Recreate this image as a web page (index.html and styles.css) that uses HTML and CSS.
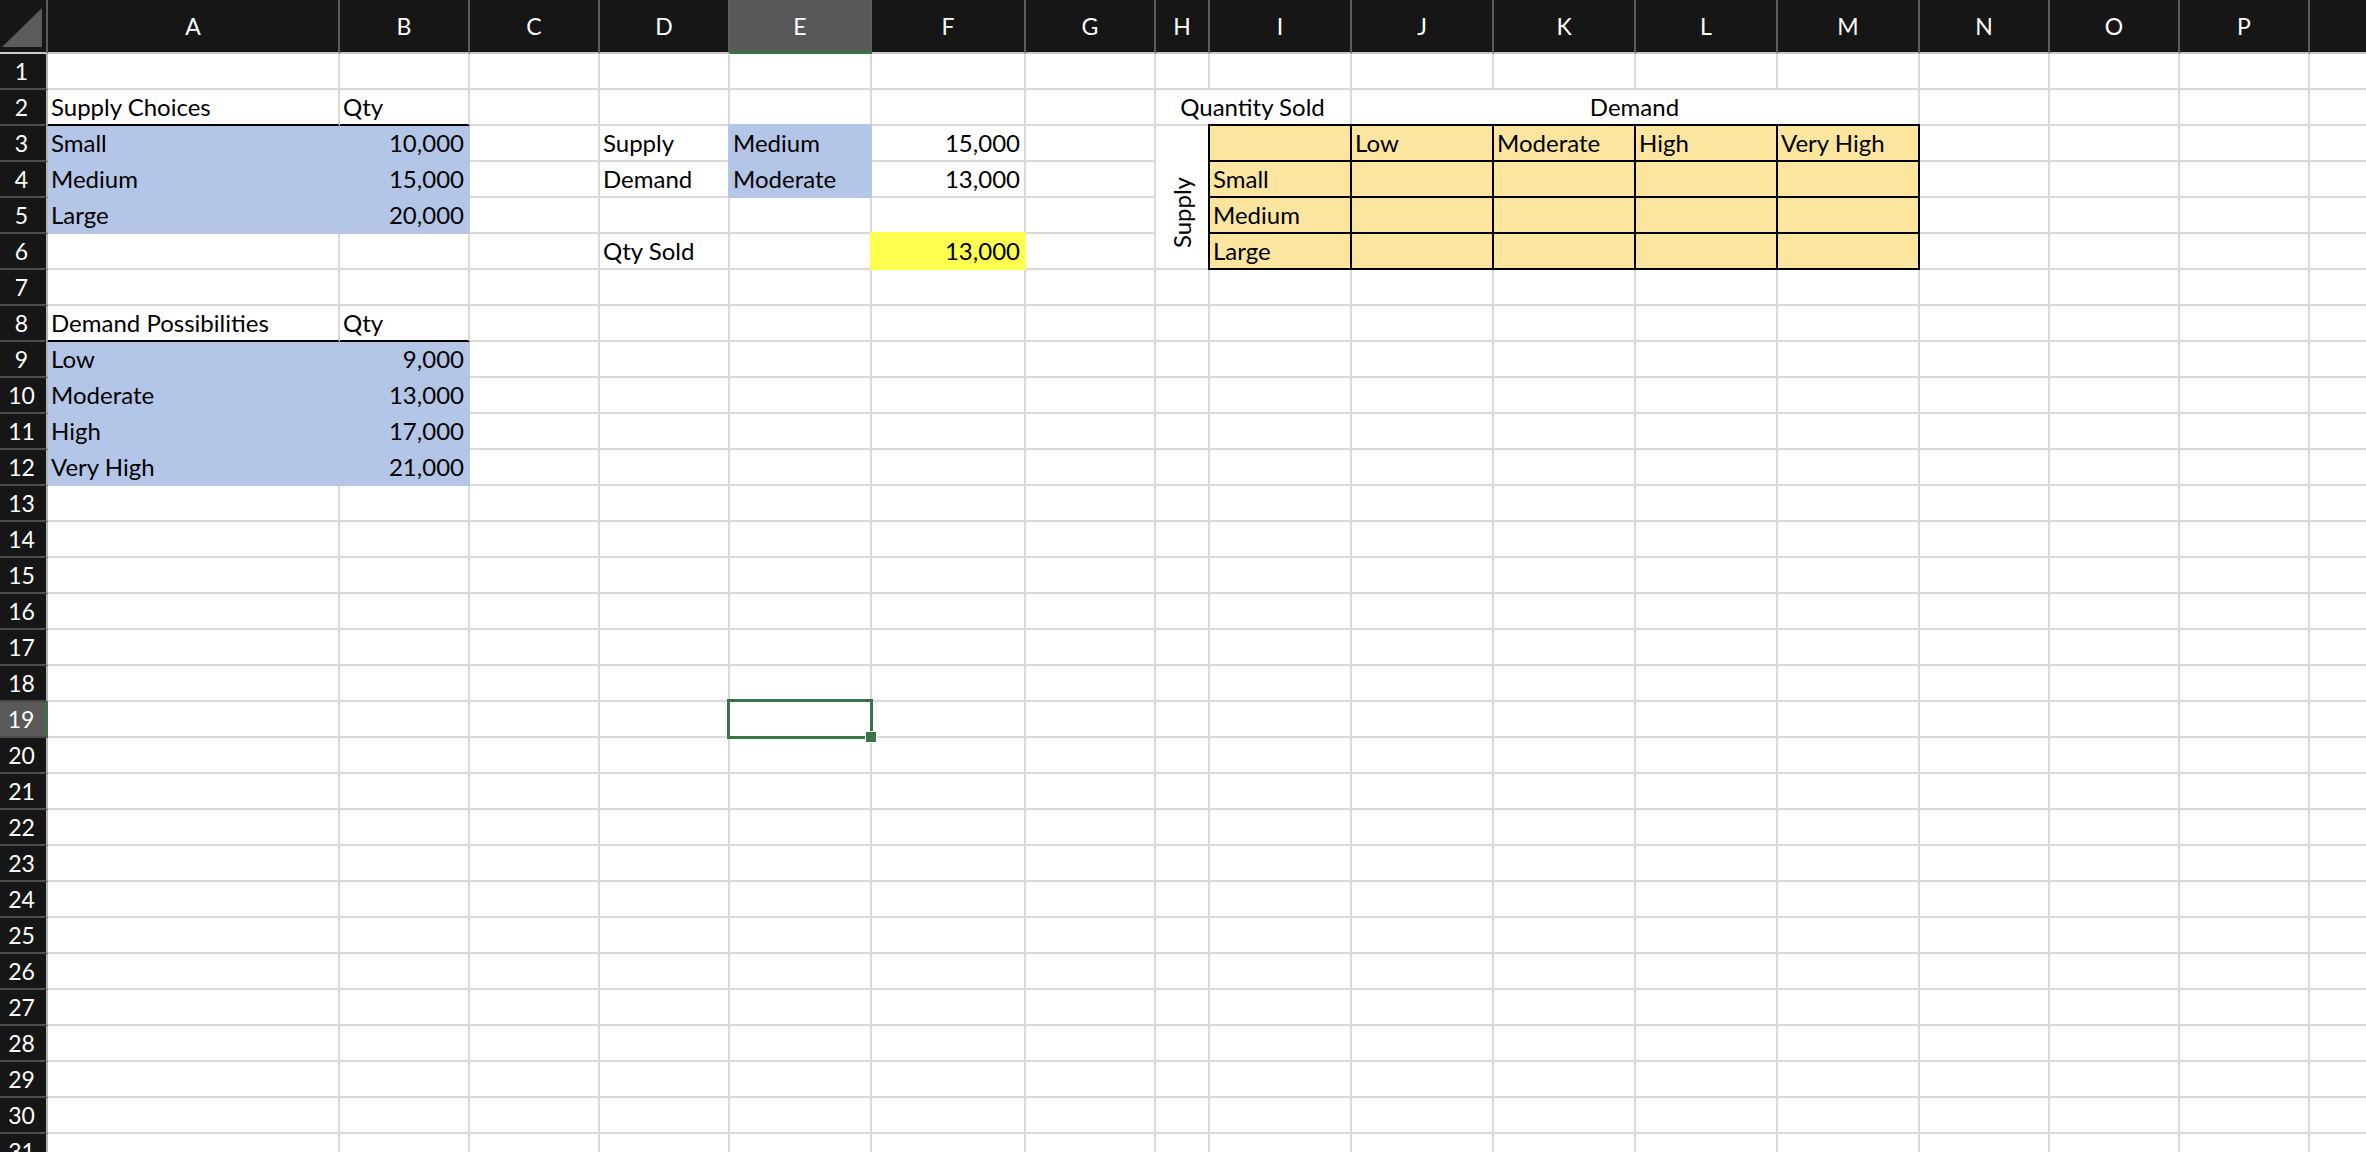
FILE: index.html
```html
<!DOCTYPE html>
<html lang="en">
<head>
<meta charset="utf-8">
<title>Sheet</title>
<link rel="stylesheet" href="styles.css">
</head>
<body>
<div class="sheet">
  <div class="corner"><svg width="46" height="52" viewBox="0 0 46 52"><polygon points="2,47 42,47 42,8" fill="#5b5b5b"/></svg></div>
  <div class="ch">A</div><div class="ch">B</div><div class="ch">C</div><div class="ch">D</div><div class="ch act">E</div><div class="ch">F</div><div class="ch">G</div><div class="ch">H</div><div class="ch">I</div><div class="ch">J</div><div class="ch">K</div><div class="ch">L</div><div class="ch">M</div><div class="ch">N</div><div class="ch">O</div><div class="ch">P</div><div class="ch"></div>

  <div class="rh">1</div><span></span><span></span><span></span><span></span><span></span><span></span><span></span><span></span><span></span><span></span><span></span><span></span><span></span><span></span><span></span><span></span><span></span>

  <div class="rh">2</div><span class="ul">Supply Choices</span><span class="ul">Qty</span><span></span><span></span><span></span><span></span><span></span><span class="m2 ctr">Quantity Sold</span><span class="m4 ctr">Demand</span><span></span><span></span><span></span><span></span>

  <div class="rh">3</div><span class="blue">Small</span><span class="blue n">10,000</span><span></span><span>Supply</span><span class="blue cover-b">Medium</span><span class="n">15,000</span><span></span><span class="vm"><em>Supply</em></span><span class="mx mtl"></span><span class="mx mt">Low</span><span class="mx mt">Moderate</span><span class="mx mt">High</span><span class="mx mt">Very High</span><span></span><span></span><span></span><span></span>

  <div class="rh">4</div><span class="blue">Medium</span><span class="blue n">15,000</span><span></span><span>Demand</span><span class="blue cover-b">Moderate</span><span class="n">13,000</span><span></span><span class="mx ml">Small</span><span class="mx"></span><span class="mx"></span><span class="mx"></span><span class="mx"></span><span></span><span></span><span></span><span></span>

  <div class="rh">5</div><span class="blue">Large</span><span class="blue n">20,000</span><span></span><span></span><span></span><span></span><span></span><span class="mx ml">Medium</span><span class="mx"></span><span class="mx"></span><span class="mx"></span><span class="mx"></span><span></span><span></span><span></span><span></span>

  <div class="rh">6</div><span></span><span></span><span></span><span>Qty Sold</span><span></span><span class="yel n">13,000</span><span></span><span class="mx ml">Large</span><span class="mx"></span><span class="mx"></span><span class="mx"></span><span class="mx"></span><span></span><span></span><span></span><span></span>

  <div class="rh">7</div><span></span><span></span><span></span><span></span><span></span><span></span><span></span><span></span><span></span><span></span><span></span><span></span><span></span><span></span><span></span><span></span><span></span>

  <div class="rh">8</div><span class="ul">Demand Possibilities</span><span class="ul">Qty</span><span></span><span></span><span></span><span></span><span></span><span></span><span></span><span></span><span></span><span></span><span></span><span></span><span></span><span></span><span></span>

  <div class="rh">9</div><span class="blue">Low</span><span class="blue n">9,000</span><span></span><span></span><span></span><span></span><span></span><span></span><span></span><span></span><span></span><span></span><span></span><span></span><span></span><span></span><span></span>

  <div class="rh">10</div><span class="blue">Moderate</span><span class="blue n">13,000</span><span></span><span></span><span></span><span></span><span></span><span></span><span></span><span></span><span></span><span></span><span></span><span></span><span></span><span></span><span></span>

  <div class="rh">11</div><span class="blue">High</span><span class="blue n">17,000</span><span></span><span></span><span></span><span></span><span></span><span></span><span></span><span></span><span></span><span></span><span></span><span></span><span></span><span></span><span></span>

  <div class="rh">12</div><span class="blue">Very High</span><span class="blue n">21,000</span><span></span><span></span><span></span><span></span><span></span><span></span><span></span><span></span><span></span><span></span><span></span><span></span><span></span><span></span><span></span>

  <div class="rh">13</div><span></span><span></span><span></span><span></span><span></span><span></span><span></span><span></span><span></span><span></span><span></span><span></span><span></span><span></span><span></span><span></span><span></span>
  <div class="rh">14</div><span></span><span></span><span></span><span></span><span></span><span></span><span></span><span></span><span></span><span></span><span></span><span></span><span></span><span></span><span></span><span></span><span></span>
  <div class="rh">15</div><span></span><span></span><span></span><span></span><span></span><span></span><span></span><span></span><span></span><span></span><span></span><span></span><span></span><span></span><span></span><span></span><span></span>
  <div class="rh">16</div><span></span><span></span><span></span><span></span><span></span><span></span><span></span><span></span><span></span><span></span><span></span><span></span><span></span><span></span><span></span><span></span><span></span>
  <div class="rh">17</div><span></span><span></span><span></span><span></span><span></span><span></span><span></span><span></span><span></span><span></span><span></span><span></span><span></span><span></span><span></span><span></span><span></span>
  <div class="rh">18</div><span></span><span></span><span></span><span></span><span></span><span></span><span></span><span></span><span></span><span></span><span></span><span></span><span></span><span></span><span></span><span></span><span></span>
  <div class="rh act">19</div><span></span><span></span><span></span><span></span><span class="cur"><span class="sel"></span><span class="fh"></span></span><span></span><span></span><span></span><span></span><span></span><span></span><span></span><span></span><span></span><span></span><span></span><span></span>
  <div class="rh">20</div><span></span><span></span><span></span><span></span><span></span><span></span><span></span><span></span><span></span><span></span><span></span><span></span><span></span><span></span><span></span><span></span><span></span>
  <div class="rh">21</div><span></span><span></span><span></span><span></span><span></span><span></span><span></span><span></span><span></span><span></span><span></span><span></span><span></span><span></span><span></span><span></span><span></span>
  <div class="rh">22</div><span></span><span></span><span></span><span></span><span></span><span></span><span></span><span></span><span></span><span></span><span></span><span></span><span></span><span></span><span></span><span></span><span></span>
  <div class="rh">23</div><span></span><span></span><span></span><span></span><span></span><span></span><span></span><span></span><span></span><span></span><span></span><span></span><span></span><span></span><span></span><span></span><span></span>
  <div class="rh">24</div><span></span><span></span><span></span><span></span><span></span><span></span><span></span><span></span><span></span><span></span><span></span><span></span><span></span><span></span><span></span><span></span><span></span>
  <div class="rh">25</div><span></span><span></span><span></span><span></span><span></span><span></span><span></span><span></span><span></span><span></span><span></span><span></span><span></span><span></span><span></span><span></span><span></span>
  <div class="rh">26</div><span></span><span></span><span></span><span></span><span></span><span></span><span></span><span></span><span></span><span></span><span></span><span></span><span></span><span></span><span></span><span></span><span></span>
  <div class="rh">27</div><span></span><span></span><span></span><span></span><span></span><span></span><span></span><span></span><span></span><span></span><span></span><span></span><span></span><span></span><span></span><span></span><span></span>
  <div class="rh">28</div><span></span><span></span><span></span><span></span><span></span><span></span><span></span><span></span><span></span><span></span><span></span><span></span><span></span><span></span><span></span><span></span><span></span>
  <div class="rh">29</div><span></span><span></span><span></span><span></span><span></span><span></span><span></span><span></span><span></span><span></span><span></span><span></span><span></span><span></span><span></span><span></span><span></span>
  <div class="rh">30</div><span></span><span></span><span></span><span></span><span></span><span></span><span></span><span></span><span></span><span></span><span></span><span></span><span></span><span></span><span></span><span></span><span></span>
  <div class="rh">31</div><span></span><span></span><span></span><span></span><span></span><span></span><span></span><span></span><span></span><span></span><span></span><span></span><span></span><span></span><span></span><span></span><span></span>
</div>
</body>
</html>
```

FILE: styles.css
```css
:root {
  --grid: #d9d9d9;
  --blue: #b4c6e7;
  --tan: #fce69f;
  --yel: #ffff50;
  --sel: #3b7349;
  --hdr: #161616;
}

html, body {
  margin: 0;
  padding: 0;
  background: #ffffff;
  overflow: hidden;
}

.sheet {
  display: grid;
  grid-template-columns: 48px 292px 130px 130px 130px 142px 154px 130px 54px 142px 142px 142px 142px 142px 130px 130px 130px 130px;
  grid-template-rows: 54px;
  grid-auto-rows: 36px;
  width: max-content;
  font-family: Lato, "Open Sans", "Liberation Sans", sans-serif;
  color: #000;
}

.corner {
  background: var(--hdr);
  border-right: 2px solid #5c5c5c;
  border-bottom: 2px solid #c9c9c9;
  display: flex;
}

.ch {
  background: var(--hdr);
  color: #fff;
  font-size: 23px;
  line-height: 22px;
  display: flex;
  align-items: center;
  justify-content: center;
  border-right: 2px solid #5c5c5c;
  border-bottom: 2px solid #c9c9c9;
}

.ch.act {
  background: #585858;
  border-bottom: 3px solid var(--sel);
}

.rh {
  background: var(--hdr);
  color: #fff;
  font-size: 23px;
  line-height: 24px;
  display: flex;
  align-items: center;
  justify-content: center;
  padding-right: 3px;
  border-right: 2px solid #b5b5b5;
  border-bottom: 2px solid #4a4a4a;
}

.rh.act {
  background: #595959;
  border-right: 3px solid var(--sel);
}

:where(.sheet) > span {
  display: flex;
  align-items: flex-end;
  padding: 0 4px 5px 3px;
  border-right: 2px solid var(--grid);
  border-bottom: 2px solid var(--grid);
  font-size: 24px;
  line-height: 24px;
  white-space: nowrap;
  min-width: 0;
}

.n { justify-content: flex-end; }
.ctr { justify-content: center; }
.ul { border-bottom-color: #000; }

.blue {
  background: var(--blue);
  border-color: var(--blue);
}

.cover-b {
  box-shadow: -2px 0 0 var(--blue), 0 -2px 0 var(--blue), -2px -2px 0 var(--blue);
}

.yel {
  background: var(--yel);
  border-color: var(--yel);
  box-shadow: -2px 0 0 var(--yel), 0 -2px 0 var(--yel), -2px -2px 0 var(--yel);
}

.mx {
  background: var(--tan);
  border-color: #000;
}

.mt { box-shadow: 0 -2px 0 #000; }
.ml { box-shadow: -2px 0 0 #000; }
.mtl { box-shadow: -2px 0 0 #000, 0 -2px 0 #000, -2px -2px 0 #000; }

.m2 { grid-column: span 2; }
.m4 { grid-column: span 4; }

.vm {
  grid-row: span 4;
  flex-direction: column;
  align-items: center;
  justify-content: flex-end;
  padding: 0 0 20px 0;
}

.vm em {
  font-style: normal;
  writing-mode: vertical-rl;
  transform: rotate(180deg);
  line-height: 24px;
}

.cur {
  position: relative;
}

.sel {
  position: absolute;
  left: -3px;
  top: -3px;
  right: -3px;
  bottom: -3px;
  border: 3px solid var(--sel);
}

.fh {
  position: absolute;
  left: 136px;
  top: 30px;
  width: 10px;
  height: 10px;
  background: var(--sel);
  box-shadow: 0 0 0 1px #fff;
}
```
